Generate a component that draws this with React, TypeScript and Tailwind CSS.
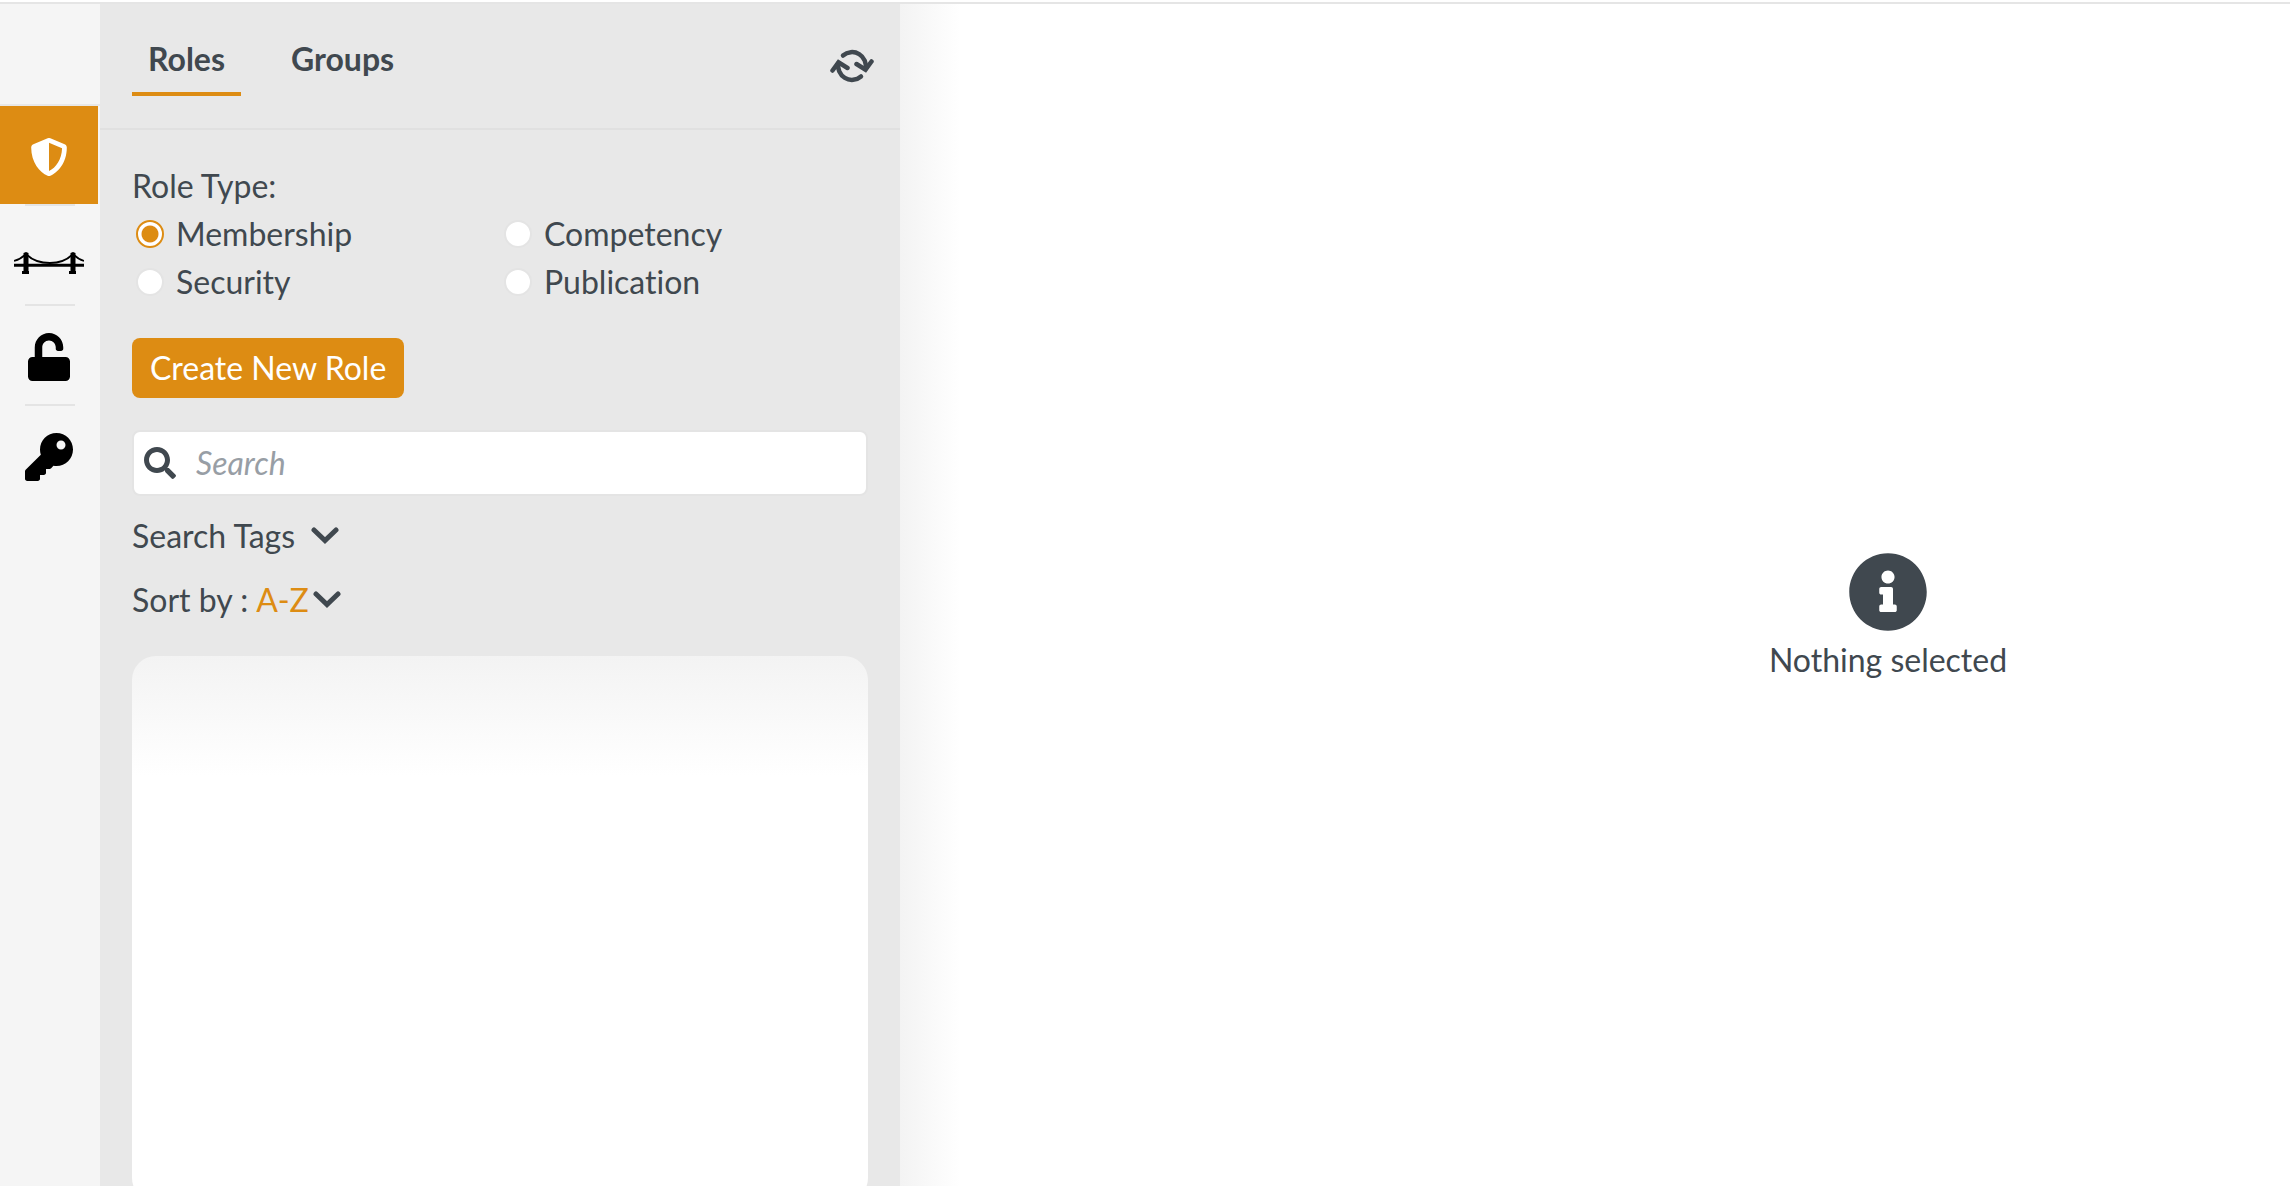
import { FaInfoCircle, FaKey, FaSearch, FaShieldAlt, FaUnlock } from "react-icons/fa";

const roleTypes = ["Membership", "Competency", "Security", "Publication"];

function BridgeIcon() {
  return (
    <svg width="70" height="22" viewBox="0 0 70 22" fill="none" aria-hidden="true">
      <path d="M0 13.2h70" stroke="black" strokeWidth="3" />
      <path d="M0 9C5 7.500 9 5 12 2C17 7 26 11 36 11S54 7 59 2C62 5 65 7.500 70 9" stroke="black" strokeWidth="1.800" />
      <path d="M9.500 1l2.500-1 2.500 1v18h.5v3H8v-3h1.500zM56.500 1l2.500-1 2.500 1v18h.5v3h-7v-3h1.500z" fill="black" />
    </svg>
  );
}

function RefreshIcon() {
  return (
    <svg width="44" height="34" viewBox="0 0 44 34" fill="none" stroke="currentColor" strokeWidth="4.5" aria-hidden="true">
      <path d="M13 6.500A13.800 13.800 0 0 1 35.500 20" strokeLinecap="round" />
      <path d="M31 27.500A13.800 13.800 0 0 1 8.500 14" strokeLinecap="round" />
      <path d="M26.500 15l9 5.700 6-8.200M17.500 19l-9-5.700-6 8.200" strokeLinecap="round" />
    </svg>
  );
}

function Chevron() {
  return (
    <svg width="28" height="18" viewBox="0 0 28 18" fill="none" stroke="currentColor" strokeWidth="5" strokeLinecap="round" aria-hidden="true">
      <path d="M3 3l11 10.500L25 3" />
    </svg>
  );
}

function Rail() {
  return (
    <nav className="flex w-[100px] shrink-0 flex-col bg-[#f5f5f5] text-black">
      <div className="h-[102px] border-b-2 border-[#e8e8e8]" />
      <a href="#" aria-label="Roles" className="flex h-[98px] w-[98px] items-center justify-center bg-[#dd8c13] pt-1 text-white">
        <FaShieldAlt size={38} />
      </a>
      <div className="mx-auto h-0.5 w-[50px] bg-[#e4e4e4]" />
      <a href="#" aria-label="Bridges" className="flex h-[98px] w-[98px] items-center justify-center pt-4">
        <BridgeIcon />
      </a>
      <div className="mx-auto h-0.5 w-[50px] bg-[#e4e4e4]" />
      <a href="#" aria-label="Permissions" className="flex h-[98px] w-[98px] items-center justify-center pt-1">
        <FaUnlock size={48} />
      </a>
      <div className="mx-auto h-0.5 w-[50px] bg-[#e4e4e4]" />
      <a href="#" aria-label="Keys" className="flex h-[98px] w-[98px] items-center justify-center pt-1">
        <FaKey size={48} />
      </a>
    </nav>
  );
}

function RolesPanel() {
  return (
    <section className="flex w-[800px] shrink-0 flex-col bg-[#e8e8e8]">
      <header className="flex h-[126px] items-start justify-between border-b-2 border-[#e0e0e0] pl-8 pr-[26px]">
        <div className="flex gap-[34px] pt-8 font-bold">
          <button type="button" className="h-[60px] border-b-4 border-[#dd8c13] px-4 pb-[10px]">
            Roles
          </button>
          <button type="button" className="h-[60px] border-b-4 border-transparent px-4 pb-[10px]">
            Groups
          </button>
        </div>
        <button type="button" aria-label="Refresh" className="mt-[45px]">
          <RefreshIcon />
        </button>
      </header>

      <div className="flex flex-1 flex-col px-8 pt-8">
        <fieldset>
          <legend className="leading-[48px]">Role Type:</legend>
          <div className="grid grid-cols-2">
            {roleTypes.map((type) => (
              <label key={type} className="flex h-12 items-center gap-3 pl-1">
                <input
                  type="radio"
                  name="role-type"
                  defaultChecked={type === "Membership"}
                  className="size-7 appearance-none rounded-full border-2 border-[#e4e4e4] bg-white checked:border-[#dd8c13] checked:bg-radial checked:from-[#dd8c13] checked:from-[8px] checked:to-white checked:to-[9px]"
                />
                {type}
              </label>
            ))}
          </div>
        </fieldset>

        <button type="button" className="mt-8 h-[60px] self-start rounded-lg bg-[#dd8c13] px-[18px] text-white">
          Create New Role
        </button>

        <label className="mt-8 flex h-[66px] items-center gap-5 rounded-lg border-2 border-[#e4e4e4] bg-white px-[10px]">
          <FaSearch size={32} className="shrink-0" />
          <input
            type="text"
            aria-label="Search"
            placeholder="Search"
            className="min-w-0 flex-1 outline-none placeholder:italic placeholder:text-[#989ea5]"
          />
        </label>

        <button type="button" className="mt-4 flex h-12 items-center gap-4 self-start">
          Search Tags <Chevron />
        </button>
        <label className="mt-4 flex h-12 items-center gap-2 self-start">
          Sort by :
          <span className="flex items-center gap-1">
            <select className="appearance-none text-[#dd8c13] outline-none [field-sizing:content]">
              <option>A-Z</option>
              <option>Z-A</option>
            </select>
            <Chevron />
          </span>
        </label>

        <div className="-mb-4 mt-8 flex-1 rounded-3xl bg-linear-to-b from-[#f3f3f3] to-white to-[120px]" />
      </div>
    </section>
  );
}

function EmptyState() {
  return (
    <main className="flex-1 bg-linear-to-r from-[#f3f3f3] to-white to-[60px] pl-[586px] pt-[548px]">
      <div className="flex flex-col items-center gap-2">
        <FaInfoCircle size={80} />
        <p>Nothing selected</p>
      </div>
    </main>
  );
}

export default function App() {
  return (
    <div className="flex h-screen flex-col overflow-hidden bg-white pt-0.5 font-['Lato',sans-serif] text-[32px] leading-10 text-[#40484f] [font-variant-ligatures:none]">
      <div className="h-0.5 shrink-0 bg-[#e5e5e5]" />
      <div className="flex min-h-0 flex-1">
        <Rail />
        <RolesPanel />
        <EmptyState />
      </div>
    </div>
  );
}
